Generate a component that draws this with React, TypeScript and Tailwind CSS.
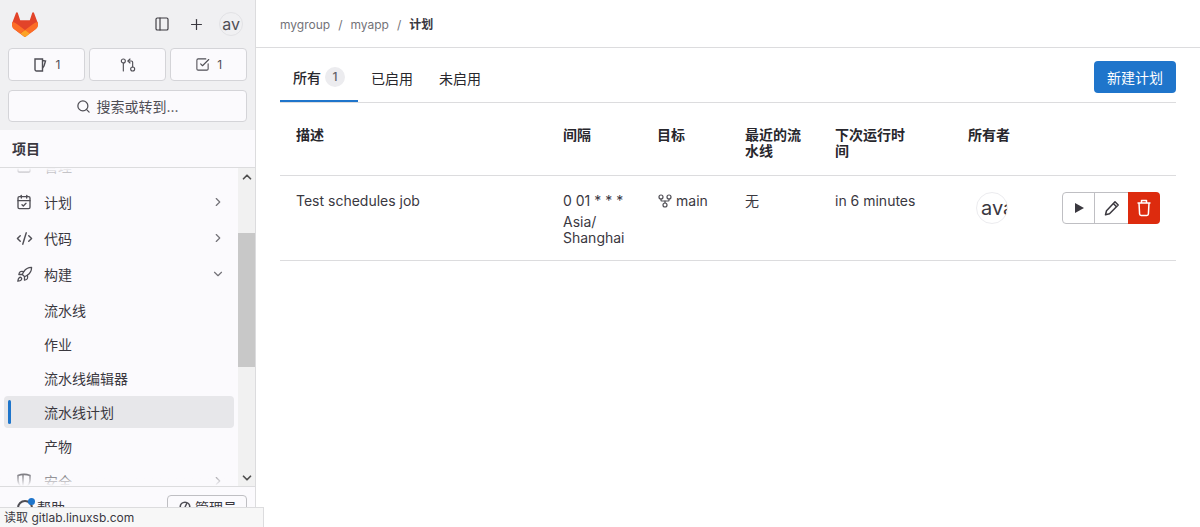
import React from 'react';
import { ChevronDown, ChevronRight, ChevronUp, CodeXml, Plus, Search, CalendarCheck, GitPullRequestArrow, SquareCheckBig, Rocket, Square, PanelLeft, GitFork } from 'lucide-react';

const font = 'font-["Inter","Noto_Sans_CJK_SC",sans-serif]';

// Small GitLab tanuki
const Logo = () => (
  <svg width="26" height="25" viewBox="0 0 25 24">
    <path d="M24.5 9.7l-.03-.09L21.1.8a.9.9 0 0 0-1.7.1l-2.27 6.96H7.87L5.6.9a.9.9 0 0 0-1.7-.1L.53 9.6l-.03.1a6.2 6.2 0 0 0 2.06 7.18l.01.01.03.02 5.1 3.82 2.52 1.91 1.54 1.16a1 1 0 0 0 1.25 0l1.54-1.16 2.52-1.91 5.13-3.84a6.2 6.2 0 0 0 2.3-7.19z" fill="#E24329" />
    <path d="M24.5 9.7l-.03-.09a11.4 11.4 0 0 0-4.53 2.04l-7.35 5.56 4.68 3.54 5.13-3.84a6.2 6.2 0 0 0 2.1-7.21z" fill="#FC6D26" />
    <path d="M7.91 20.75l2.52 1.91 1.54 1.16a1 1 0 0 0 1.25 0l1.54-1.16 2.52-1.91-4.68-3.54-4.69 3.54z" fill="#FCA326" />
    <path d="M5.06 11.65A11.4 11.4 0 0 0 .53 9.6l-.03.1a6.2 6.2 0 0 0 2.06 7.18l.01.01.03.02 5.1 3.82 4.69-3.54-7.33-5.54z" fill="#FC6D26" />
  </svg>
);

const ShieldIcon = () => (
  <svg width="16" height="16" viewBox="0 0 16 16" fill="none" stroke="#4f4e55" strokeWidth="1.5">
    <path d="M2 2.5c4-1.5 8-1.5 12 0v5c0 3.5-2.5 6-6 7.5-3.5-1.5-6-4-6-7.5z" />
    <path d="M7 2v12" />
  </svg>
);

const NavRow = ({ icon, label, chevron }: { icon: React.ReactNode; label: string; chevron?: 'right' | 'down' }) => (
  <div className="flex h-9 items-center pl-[16px] pr-[13px] text-[14px] text-[#3a383f]">
    <span className="flex w-[28px] shrink-0 items-center">{icon}</span>
    <span className="flex-1">{label}</span>
    {chevron === 'right' && <ChevronRight size={14} className="text-[#737278]" />}
    {chevron === 'down' && <ChevronDown size={14} className="text-[#737278]" />}
  </div>
);

const SubRow = ({ label, active }: { label: string; active?: boolean }) => (
  <div className={`relative mx-[4px] flex h-[32px] shrink-0 items-center rounded-[4px] pl-[40px] text-[14px] text-[#3a383f] ${active ? 'bg-[#e7e7ea]' : ''}`}>
    {active && <span className="absolute left-[4px] top-[4px] h-[24px] w-[3px] rounded-[2px] bg-[#1f75cb]" />}
    {label}
  </div>
);

const TopButton = ({ icon, count }: { icon: React.ReactNode; count?: string }) => (
  <div className="flex h-[33px] flex-1 items-center justify-center gap-[7px] rounded-[4px] border border-[#d4d4d8] bg-[#fbfafd] text-[12px] text-[#4f4e55]">
    {icon}
    {count && <span>{count}</span>}
  </div>
);

const Sidebar = () => (
  <aside className="flex h-full w-[256px] shrink-0 flex-col border-r border-[#dcdcde] bg-[#fbfafd]">
    <div className="bg-[#f0f0f2] px-[8px] pb-[8px]">
      <div className="flex h-[48px] items-center pl-[4px] pr-[4px]">
        <Logo />
        <div className="flex-1" />
        <PanelLeft size={16} strokeWidth={1.7} className="mr-[18px] text-[#3a383f]" />
        <Plus size={17} strokeWidth={1.7} className="mr-[14px] text-[#3a383f]" />
        <div className="flex h-[24px] w-[24px] items-center justify-center overflow-hidden rounded-full border border-[#e2e2e5] text-[16px] text-[#4f4e55]">av</div>
      </div>
      <div className="flex gap-[4.5px]">
        <TopButton icon={<svg width="16" height="16" viewBox="0 0 16 16" fill="none" stroke="#4f4e55" strokeWidth="1.4"><path d="M3 2h7.5v12H4.5A1.5 1.5 0 0 1 3 12.5z" /><path d="M10.5 3.5l3 .5-1.5 5-1.5 2" /></svg>} count="1" />
        <TopButton icon={<GitPullRequestArrow size={16} strokeWidth={1.7} className="text-[#4f4e55]" />} />
        <TopButton icon={<SquareCheckBig size={15} strokeWidth={1.7} className="text-[#4f4e55]" />} count="1" />
      </div>
      <div className="mt-[9px] flex h-[32px] items-center justify-center gap-[5px] rounded-[4px] border border-[#d4d4d8] bg-[#fbfafd] text-[14px] text-[#4f4e55]">
        <Search size={15} />
        搜索或转到...
      </div>
    </div>
    <div className="flex h-[38px] shrink-0 items-center border-b border-[#dcdcde] pl-[12px] text-[14px] font-semibold text-[#3a383f]">项目</div>
    <div className="relative flex min-h-0 flex-1">
      <div className="min-w-0 flex-1 overflow-hidden">
        <div className="-mt-[20px]">
          <NavRow label="管理" icon={<Square size={16} className="text-[#4f4e55]" />} />
          <NavRow label="计划" chevron="right" icon={<CalendarCheck size={16} className="text-[#4f4e55]" />} />
          <NavRow label="代码" chevron="right" icon={<CodeXml size={17} className="text-[#4f4e55]" />} />
          <NavRow label="构建" chevron="down" icon={<Rocket size={17} strokeWidth={1.8} className="text-[#4f4e55]" />} />
          <div className="flex flex-col gap-[2px] pb-[1px] pt-[2px]">
            <SubRow label="流水线" />
            <SubRow label="作业" />
            <SubRow label="流水线编辑器" />
            <SubRow label="流水线计划" active />
            <SubRow label="产物" />
          </div>
          <NavRow label="安全" chevron="right" icon={<ShieldIcon />} />
        </div>
      </div>
      <div className="absolute left-0 top-0 h-[16px] w-[238px] bg-gradient-to-b from-[#fbfafd] to-transparent" />
      <div className="absolute bottom-0 left-0 h-[16px] w-[238px] bg-gradient-to-t from-[#fbfafd] to-transparent" />
      {/* fake scrollbar */}
      <div className="flex w-[17px] shrink-0 flex-col bg-[#f1f1f1]">
        <div className="flex h-[17px] items-center justify-center"><ChevronUp size={14} strokeWidth={3} className="text-[#505050]" /></div>
        <div className="mt-[48px] h-[134px] bg-[#c8c8c8]" />
        <div className="flex-1" />
        <div className="flex h-[17px] items-center justify-center"><ChevronDown size={14} strokeWidth={3} className="text-[#505050]" /></div>
      </div>
    </div>
    <div className="flex h-[41px] shrink-0 items-start justify-between border-t border-[#dcdcde] pl-[17px] pr-[8px] pt-[8px] text-[14px] text-[#3a383f]">
      <span className="mt-[2px] flex items-center gap-[4px]">
        <span className="relative h-[16px] w-[16px] rounded-full border-2 border-[#4f4e55]">
          <span className="absolute -right-[4px] -top-[4px] h-[7px] w-[7px] rounded-full bg-[#1f75cb]" />
        </span>
        帮助
      </span>
      <span className="flex h-[24px] w-[80px] items-center justify-center gap-[4px] rounded-[4px] border border-[#bfbfc3] pl-[2px]">
        <svg width="12" height="12" viewBox="0 0 12 12" fill="none" stroke="#4f4e55" strokeWidth="1.6"><circle cx="6" cy="6" r="4.8" /><path d="M6 6l2-4" /></svg>
        管理员
      </span>
    </div>
  </aside>
);

const headers = [
  { label: '描述', w: 'w-[267px] pl-[16px]' },
  { label: '间隔', w: 'w-[94px] pl-[16px]' },
  { label: '目标', w: 'w-[88px] pl-[16px]' },
  { label: '最近的流水线', w: 'w-[90px] pl-[16px] pr-[12px]' },
  { label: '下次运行时间', w: 'w-[133px] pl-[16px] pr-[40px]' },
  { label: '所有者', w: 'w-[110px] pl-[16px]' },
  { label: '', w: '' },
];

const SchedulesTable = () => (
  <table className="w-full table-fixed border-collapse text-[14px] text-[#3a383f]">
    <thead>
      <tr className="h-[72px] border-b border-[#dcdcde]">
        {headers.map((h) => (
          <th key={h.label} className={`${h.w} pb-[8px] pt-[24px] align-top text-left text-[14px] font-semibold leading-[16px] text-[#28272d]`}>{h.label}</th>
        ))}
      </tr>
    </thead>
    <tbody>
      <tr className="h-[85px] border-b border-[#dcdcde] align-top">
        <td className="pl-[16px] pt-[16px] leading-[18px]">Test schedules job</td>
        <td className="pl-[16px] pt-[16px] leading-[16px]">
          <div className="mb-[4px] leading-[18px]">0 01 * * *</div>
          Asia/<br />Shanghai
        </td>
        <td className="pl-[16px] pt-[16px] leading-[18px]">
          <span className="flex items-center gap-[3px]"><GitFork size={16} strokeWidth={1.8} className="text-[#4f4e55]" /> main</span>
        </td>
        <td className="pl-[16px] pt-[16px] leading-[18px]">无</td>
        <td className="pl-[16px] pt-[16px] leading-[18px]">in 6 minutes</td>
        <td className="pl-[24px] pt-[16px]">
          <div className="flex h-[32px] w-[32px] items-center overflow-hidden rounded-full border border-[#ececef] pl-[4px] text-[20px]">ava</div>
        </td>
        <td className="pr-[16px] pt-[16px]">
          <div className="flex justify-end">
            <div className="flex h-[32px] w-[33px] items-center justify-center rounded-l-[4px] border border-[#bfbfc3]">
              <svg width="16" height="16" viewBox="0 0 16 16" fill="#3a383f"><path d="M4 3l9 5-9 5z" /></svg>
            </div>
            <div className="-ml-px flex h-[32px] w-[34px] items-center justify-center border-y border-l border-[#bfbfc3]">
              <svg width="16" height="16" viewBox="0 0 16 16" fill="none" stroke="#3a383f" strokeWidth="1.5" strokeLinejoin="round"><path d="M11 1.8l3.2 3.2L5.5 13.7l-4 1 1-4z" /><path d="M9.3 3.5l3.2 3.2" /></svg>
            </div>
            <div className="flex h-[32px] w-[32px] items-center justify-center rounded-r-[4px] bg-[#dd2b0e]">
              <svg width="16" height="18" viewBox="0 0 16 18" fill="none" stroke="#ffffff" strokeWidth="1.5" strokeLinejoin="round"><path d="M1.5 4h13" /><path d="M5.5 4V1.5h5V4" /><path d="M3 4l.6 11a1.5 1.5 0 0 0 1.5 1.4h5.8a1.5 1.5 0 0 0 1.5-1.4L13 4" /></svg>
            </div>
          </div>
        </td>
      </tr>
    </tbody>
  </table>
);

export default function App() {
  return (
    <div className={`relative flex h-[527px] w-[1200px] overflow-hidden bg-white ${font}`}>
      <Sidebar />
      <main className="min-w-0 flex-1">
        <div className="flex h-[48px] items-center gap-[8px] border-b border-[#dcdcde] pl-[24px] pt-[2px] text-[12px] text-[#737278]">
          <span>mygroup</span>
          <span>/</span>
          <span>myapp</span>
          <span>/</span>
          <span className="font-bold text-[#3a383f]">计划</span>
        </div>
        <div className="px-[24px]">
          <div className="flex h-[55px] items-start justify-between border-b border-[#dcdcde]">
            <div className="flex text-[14px] text-[#28272d]">
              <div className="flex h-[54px] w-[78px] items-center justify-center gap-[4px] border-b-2 border-[#1f75cb] pt-[6px] font-medium">
                所有
                <span className="flex h-[20px] w-[20px] items-center justify-center rounded-full bg-[#ececef] text-[12px] text-[#626168]">1</span>
              </div>
              <div className="flex h-[54px] items-center pl-[13px] pr-[13px] pt-[6px]">已启用</div>
              <div className="flex h-[54px] items-center pl-[13px] pr-[13px] pt-[6px]">未启用</div>
            </div>
            <div className="mt-[13px] flex h-[32px] w-[82px] items-center justify-center rounded-[4px] bg-[#1f75cb] text-[14px] text-white">新建计划</div>
          </div>
          <SchedulesTable />
        </div>
      </main>
      {/* browser status bubble */}
      <div className="absolute bottom-0 left-0 flex h-[20px] w-[264px] items-center border-r border-t border-[#dcdcde] bg-[#f7f7f7] pl-[4px] text-[12px] text-[#3a383f]">读取 gitlab.linuxsb.com</div>
    </div>
  );
}
